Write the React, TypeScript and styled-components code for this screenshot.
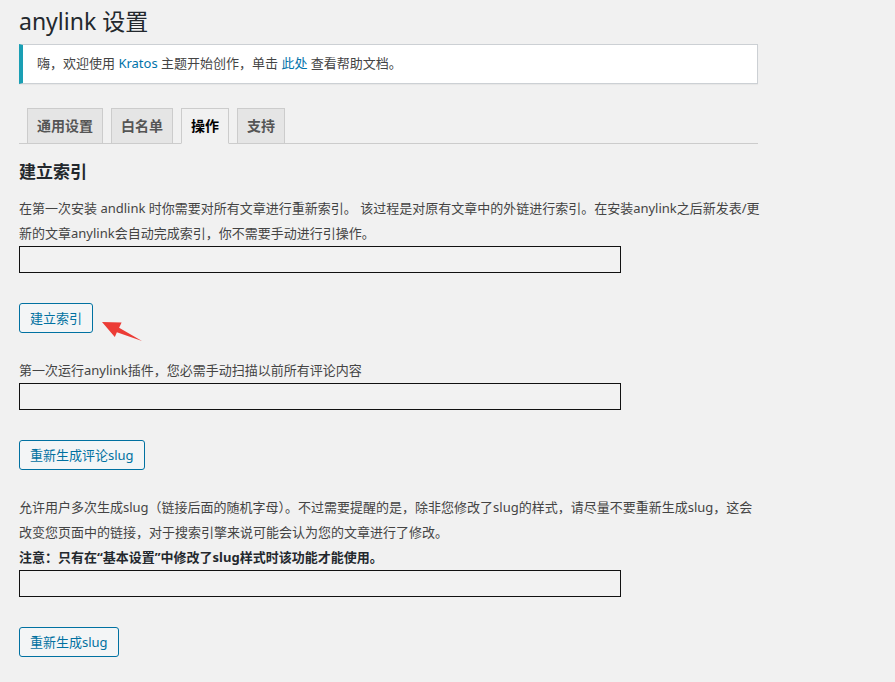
import React from 'react';
import styled, { createGlobalStyle } from 'styled-components';

const GlobalStyle = createGlobalStyle`
  html, body {
    margin: 0;
    padding: 0;
    background: #f1f1f1;
  }
  body {
    font-family: "Noto Sans", "Noto Sans CJK SC", sans-serif;
    font-size: 13px;
    color: #444;
  }
`;

const Wrap = styled.div`
  width: 739px;
  padding: 0 0 30px 19px;
`;

const Title = styled.h1`
  margin: 0;
  padding: 6px 0 3px;
  font-size: 23px;
  font-weight: 400;
  line-height: 30px;
  color: #23282d;
`;

const Notice = styled.div`
  margin: 5px 0 15px;
  padding: 1px 12px;
  background: #fff;
  border: 1px solid #ccd0d4;
  border-left: 4px solid #1a9fb4;
  box-shadow: 0 1px 1px rgba(0, 0, 0, 0.04);

  p {
    margin: 6px 0 7px;
    padding: 2px;
    line-height: 19px;
    color: #444;
  }
`;

const Link = styled.a`
  color: #0073aa;
  text-decoration: none;
`;

const TabBar = styled.nav`
  display: flex;
  padding-top: 9px;
  border-bottom: 1px solid #ccc;
`;

const Tab = styled.a<{ $active?: boolean }>`
  display: block;
  margin-left: 8px;
  margin-bottom: -1px;
  padding: 5px 9px;
  font-size: 14px;
  font-weight: 600;
  line-height: 24px;
  color: ${(p) => (p.$active ? '#000' : '#555')};
  background: ${(p) => (p.$active ? '#f1f1f1' : '#e5e5e5')};
  border: 1px solid #ccc;
  border-bottom: 1px solid ${(p) => (p.$active ? '#f1f1f1' : '#ccc')};
  text-decoration: none;
`;

const Heading = styled.h2`
  margin: 17px 0 13px;
  font-size: 17px;
  font-weight: 700;
  line-height: 22px;
  color: #23282d;
`;

const Section = styled.section`
  & + & {
    margin-top: 25px;
  }
`;

const Desc = styled.p`
  margin: 0 -7px 0 0;
  line-height: 25px;
  color: #444;
`;

const Strong = styled.p`
  margin: 0;
  line-height: 25px;
  font-weight: 700;
  color: #23282d;
`;

const Progress = styled.div`
  width: 600px;
  height: 25px;
  border: 1px solid #111;
  background: #f2f2f2;
`;

const ButtonRow = styled.div`
  position: relative;
  margin-top: 30px;
`;

const Button = styled.button`
  display: block;
  height: 30px;
  padding: 0 10px;
  font-family: inherit;
  font-size: 13px;
  line-height: 28px;
  color: #0071a1;
  background: #f3f5f6;
  border: 1px solid #0071a1;
  border-radius: 3px;
  cursor: pointer;
`;

const Arrow = styled.svg`
  position: absolute;
  left: 81px;
  top: 16px;
`;

export default function App() {
  return (
    <>
      <GlobalStyle />
      <Wrap>
        <Title>anylink 设置</Title>
        <Notice>
          <p>
            嗨，欢迎使用 <Link href="#">Kratos</Link> 主题开始创作，单击 <Link href="#">此处</Link> 查看帮助文档。
          </p>
        </Notice>
        <TabBar>
          <Tab href="#">通用设置</Tab>
          <Tab href="#">白名单</Tab>
          <Tab href="#" $active>操作</Tab>
          <Tab href="#">支持</Tab>
        </TabBar>

        <Heading>建立索引</Heading>

        <Section>
          <Desc>
            在第一次安装 andlink 时你需要对所有文章进行重新索引。 该过程是对原有文章中的外链进行索引。在安装anylink之后新发表/更新的文章anylink会自动完成索引，你不需要手动进行引操作。
          </Desc>
          <Progress />
          <ButtonRow>
            <Button>建立索引</Button>
            <Arrow width="44" height="24" viewBox="0 0 44 24">
              <polygon
                points="2,3 21.6,3.5 19.1,8.8 42,22 16.9,13.2 14.8,17.9"
                fill="#ec3c36"
              />
            </Arrow>
          </ButtonRow>
        </Section>

        <Section>
          <Desc>第一次运行anylink插件，您必需手动扫描以前所有评论内容</Desc>
          <Progress />
          <ButtonRow>
            <Button>重新生成评论slug</Button>
          </ButtonRow>
        </Section>

        <Section>
          <Desc>
            允许用户多次生成slug（链接后面的随机字母）。不过需要提醒的是，除非您修改了slug的样式，请尽量不要重新生成slug，这会改变您页面中的链接，对于搜索引擎来说可能会认为您的文章进行了修改。
          </Desc>
          <Strong>注意：只有在“基本设置”中修改了slug样式时该功能才能使用。</Strong>
          <Progress />
          <ButtonRow>
            <Button>重新生成slug</Button>
          </ButtonRow>
        </Section>
      </Wrap>
    </>
  );
}
